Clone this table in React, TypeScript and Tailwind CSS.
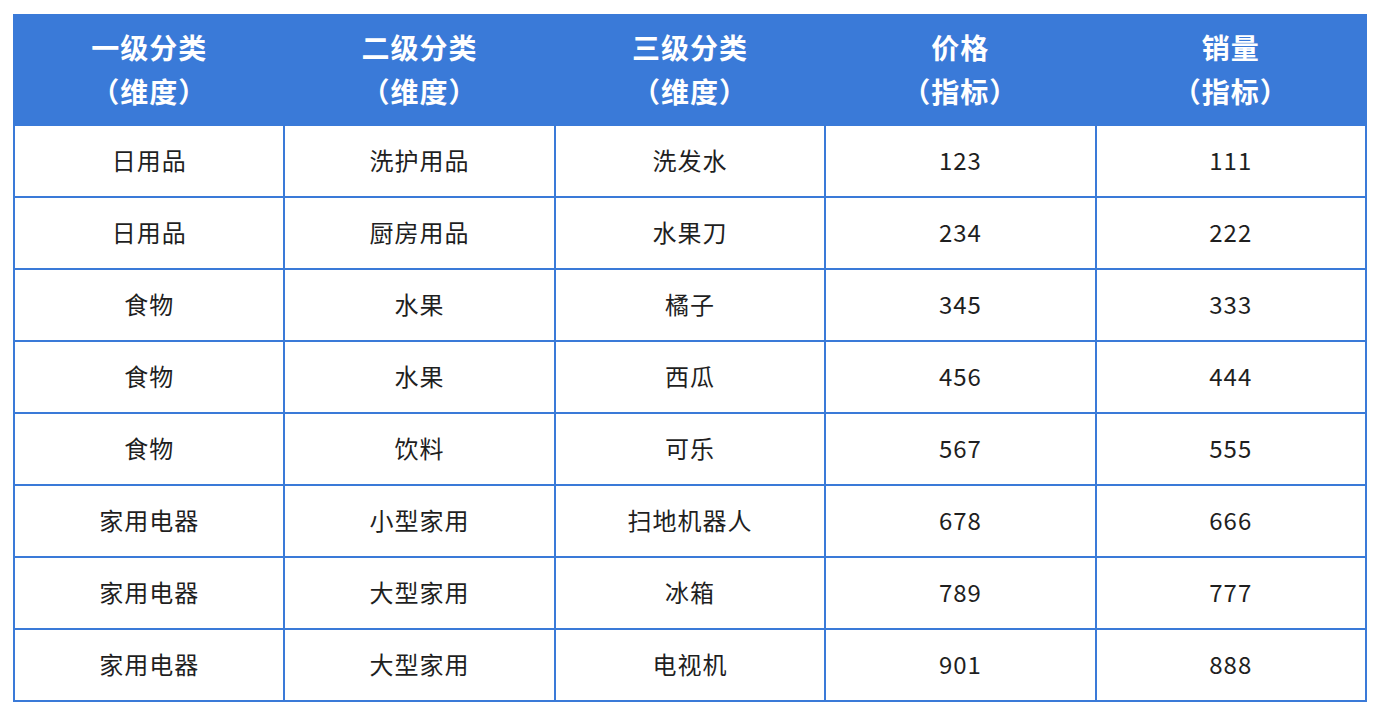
import React from 'react';

const headers = [
  ['一级分类', '（维度）'],
  ['二级分类', '（维度）'],
  ['三级分类', '（维度）'],
  ['价格', '（指标）'],
  ['销量', '（指标）'],
];

const rows = [
  ['日用品', '洗护用品', '洗发水', '123', '111'],
  ['日用品', '厨房用品', '水果刀', '234', '222'],
  ['食物', '水果', '橘子', '345', '333'],
  ['食物', '水果', '西瓜', '456', '444'],
  ['食物', '饮料', '可乐', '567', '555'],
  ['家用电器', '小型家用', '扫地机器人', '678', '666'],
  ['家用电器', '大型家用', '冰箱', '789', '777'],
  ['家用电器', '大型家用', '电视机', '901', '888'],
];

export default function App() {
  return (
    <div className="min-h-[714px] bg-white pl-[13px] pt-[14px] font-['Noto_Sans_CJK_SC','Noto_Sans',sans-serif]">
      <table className="w-[1354px] table-fixed border-collapse">
        <thead>
          <tr className="h-[110px] bg-[#3a7ad8]">
            {headers.map((h, i) => (
              <th key={i} className="border-2 border-[#3a7ad8] pb-[3px] text-center align-middle text-[28px] font-bold leading-[44px] tracking-[1px] text-white">
                <div>{h[0]}</div>
                <div>{h[1]}</div>
              </th>
            ))}
          </tr>
        </thead>
        <tbody>
          {rows.map((r, i) => (
            <tr key={i} className="h-[72px]">
              {r.map((c, j) => (
                <td key={j} className="border-2 border-[#3a7ad8] pb-[2px] text-center align-middle text-[24px] tracking-[1px] text-[#1f1f1f]">
                  {c}
                </td>
              ))}
            </tr>
          ))}
        </tbody>
      </table>
    </div>
  );
}
